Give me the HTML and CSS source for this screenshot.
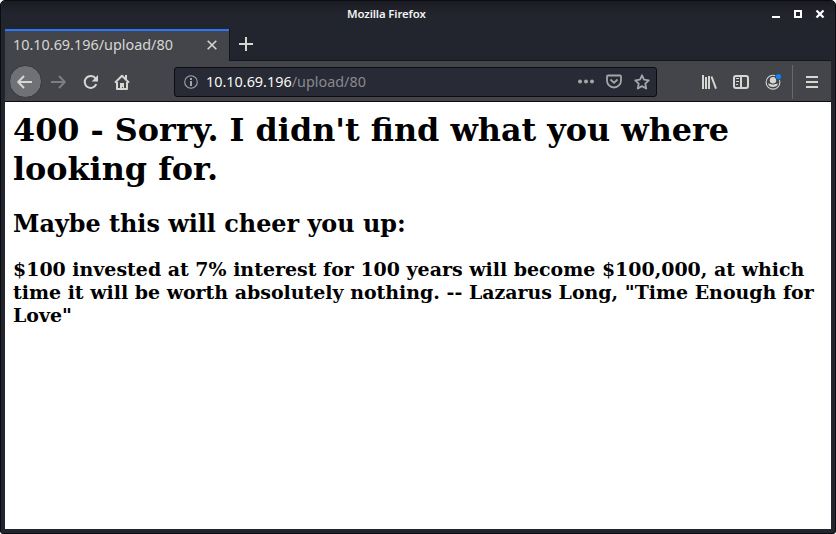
FILE: index.html
```html
<!DOCTYPE html>
<html lang="en">
<head>
<meta charset="utf-8">
<title>Mozilla Firefox</title>
<link rel="stylesheet" href="styles.css">
</head>
<body>
<div class="window">
  <header class="titlebar">
    <span class="title">Mozilla Firefox</span>
    <svg class="controls" width="54" height="10" viewBox="0 0 54 10" shape-rendering="crispEdges">
      <path fill="#fff" d="M0 6h8v2H0z"/>
      <path fill="none" stroke="#fff" stroke-width="2" d="M23 1h6v6h-6z"/>
      <path fill="none" stroke="#fff" stroke-width="2.2" shape-rendering="auto" d="M44.5 .5l7 7M51.5 .5l-7 7"/>
    </svg>
  </header>
  <div class="tabs">
    <div class="tab"><span class="tab-label">10.10.69.196/upload/80</span>
      <svg class="tab-close" width="10" height="10" viewBox="0 0 10 10"><path d="M.7.7l8.6 8.6M9.3.7L.7 9.3" stroke="#d6d6d2" stroke-width="1.6"/></svg>
    </div>
    <div class="tab-rest">
      <svg width="14" height="14" viewBox="0 0 14 14"><path d="M7 0v14M0 7h14" stroke="#d6d6d2" stroke-width="2"/></svg>
    </div>
  </div>
  <nav class="toolbar">
    <div class="back">
      <svg class="icon" viewBox="0 0 16 16"><path d="M15 8H1.5M7 2L1.2 8 7 14" class="line"/></svg>
    </div>
    <svg class="icon forward" viewBox="0 0 16 16"><path d="M1 8h13.5M9 2l5.8 6L9 14" class="line"/></svg>
    <svg class="icon reload" viewBox="0 0 16 16"><path class="line" d="M13.3 10.2A6 6 0 1 1 12.6 4.4"/><path class="solid" d="M15 1v6.5H8.7z"/></svg>
    <svg class="icon home" viewBox="0 0 16 16"><path class="line" d="M1 8.6L8 1.8l7 6.8M3 8v7h10V8"/><path class="solid" d="M11 1h2v4h-2zM6 9h4v6H9v-2H8v2H6z"/></svg>
    <div class="urlbar">
      <svg class="info" width="14" height="14" viewBox="0 0 14 14"><circle cx="7" cy="7" r="6.3" fill="none" stroke="#a5a6a9" stroke-width="1.1"/><path d="M6 3h2v2H6zM6 6h2v5H6z" fill="#a5a6a9"/></svg>
      <span class="url">10.10.69.196<span class="path">/upload/80</span></span>
      <svg class="icon dots" viewBox="0 0 16 16"><circle cx="2" cy="7.5" r="2"/><circle cx="8" cy="7.5" r="2"/><circle cx="14" cy="7.5" r="2"/></svg>
      <svg class="icon pocket" viewBox="0 0 16 16"><path class="line" d="M2 1.5h12q1 0 1 1v4a7 7 0 0 1-14 0v-4q0-1 1-1zM4.5 5.5L8 8.9l3.5-3.4"/></svg>
      <svg class="icon star" viewBox="0 0 16 16"><path class="line" d="M8 1.3l2 4.4 4.8.6-3.5 3.3.9 4.9L8 12.1l-4.2 2.4.9-4.9L1.2 6.3 6 5.7z"/></svg>
    </div>
    <svg class="icon library" viewBox="0 0 16 16"><path class="line" d="M2 1v14M5 3v12M8 2v13"/><path class="line" d="M10.5 2.5L15 14.6"/></svg>
    <svg class="icon sidebar" viewBox="0 0 16 16"><rect class="line" x="1" y="2" width="14" height="12" rx="2"/><path class="line" d="M8 2v12"/><path d="M3 4.5h3M3 7.5h3M3 10.5h2" stroke="#d6d6d2"/></svg>
    <svg class="icon account" viewBox="0 0 16 16"><circle cx="8" cy="8.2" r="6.9" fill="none" stroke="#d6d6d2" stroke-width="1.1"/><circle cx="8" cy="6.2" r="3.2" class="solid"/><path class="solid" d="M3 9.2q1.5 1 2.8.7 2.1 1 4.4 0 1.5.3 2.8-.7a5.1 4.8 0 0 1-10 0z"/><circle cx="13.5" cy="2.6" r="3.4" fill="#43454b"/><circle cx="13.5" cy="2.6" r="2.6" fill="#0a84ff"/></svg>
    <span class="separator"></span>
    <svg class="menu" width="12" height="12" viewBox="0 0 12 12"><path class="line" d="M0 1h12M0 6h12M0 11h12"/></svg>
  </nav>
  <main class="page">
    <h1>400 - Sorry. I didn't find what you where looking for.</h1>
    <h2>Maybe this will cheer you up:</h2>
    <h3>$100 invested at 7% interest for 100 years will become $100,000, at which time it will be worth absolutely nothing. -- Lazarus Long, "Time Enough for Love"</h3>
  </main>
</div>
</body>
</html>
```
FILE: styles.css
```css
* { box-sizing: border-box; }
body { margin: 0; background: #fff; font-family: "Noto Sans", sans-serif; }
.window {
  width: 836px; height: 534px; display: flex; flex-direction: column;
  padding: 0 4px 4px; border: 1px solid #0b0c10; border-radius: 5px 5px 3px 3px;
  background: #23252e; overflow: hidden;
}
.titlebar {
  height: 28px; flex: none; display: flex; align-items: center; justify-content: flex-end;
  margin: 0 -4px; padding-left: 346px; background: linear-gradient(#1b1c23, #23252e 14px);
}
.title { color: #f2f2f2; font-size: 11.4px; font-weight: 600; letter-spacing: -.12px; line-height: 26px; margin: 0 auto 2px 0; white-space: nowrap; }
.controls { margin-right: 9px; }
.tabs { height: 33px; flex: none; display: flex; background: #43454b; }
.tab {
  width: 224px; display: flex; align-items: center; justify-content: space-between;
  padding: 0 12px 1px 8px; border-top: 2px solid #2777f7; color: #d6d6d2;
}
.tab-label, .url { font-size: 14.4px; line-height: 20px; white-space: nowrap; }
.tab-label { margin-bottom: 2px; }
.tab-close { margin-bottom: 2px; }
.tab-rest { flex: 1; background: #23252e; border: solid #14151b; border-width: 0 0 1px 1px; padding: 8px 9px; margin-bottom: 1px; }
.tab-rest svg, .icon, .menu { display: block; }
.toolbar {
  height: 40px; flex: none; display: flex; align-items: center;
  background: #43454b; border-bottom: 1px solid #0b0c10; padding-left: 4px;
}
.icon { width: 16px; height: 16px; flex: none; }
.line { fill: none; stroke: #d6d6d2; stroke-width: 2; stroke-linejoin: round; }
.solid { fill: #d6d6d2; }
.back {
  width: 33px; height: 33px; display: flex; align-items: center; justify-content: center;
  border: 1px solid #36383d; border-radius: 50%; background: #707176;
}
.back .icon { margin-right: 1px; }
.forward { margin-left: 8px; }
.forward .line { stroke: #7d7e82; }
.reload { margin-left: 17px; }
.home { margin-left: 15px; }
.urlbar {
  width: 483px; height: 30px; margin-left: 44px; display: flex; align-items: center;
  padding: 0 6px 0 9px; border: 1px solid #0b0c10; border-radius: 3px; background: #282a36;
}
.url { margin-left: 8px; flex: 1; color: #f8f8f2; }
.path { color: #88898e; }
.dots { fill: #a5a6a9; }
.pocket, .star { margin-left: 12px; }
.urlbar .line { stroke: #a5a6a9; stroke-width: 1.8; }
.library { margin-left: 44px; }
.sidebar, .account { margin-left: 16px; }
.separator { width: 1px; height: 34px; margin-left: 11px; background: #66686c; }
.menu { margin-left: 13px; }
.page { flex: 1; padding: 9px 8px 8px; background: #fff; color: #000; font-family: "DejaVu Serif", serif; }
h1, h2, h3 { margin: 0; font-weight: bold; }
h1 { font-size: 31.84px; line-height: 39px; }
h2 { font-size: 23.88px; line-height: 29px; margin-top: 21px; }
h3 { font-size: 18.97px; line-height: 23px; margin-top: 19px; }
```
